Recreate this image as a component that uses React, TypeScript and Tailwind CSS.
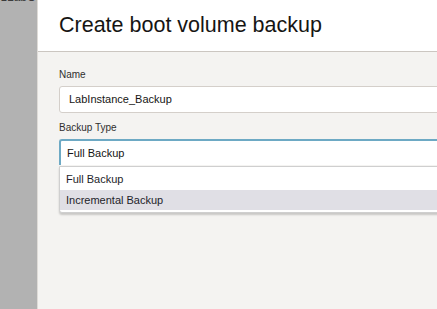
const App = () => {
  return (
    <main className="flex h-[309px] w-[437px] overflow-hidden bg-[#f4f3f1] font-['Liberation_Sans',Arial,sans-serif]">
      <aside className="w-[37px] shrink-0 overflow-hidden bg-[#b2b2b2]">
        <p className="-mt-[9px] pl-[1px] text-[12px] leading-[12px] text-[#3b3b3b]">zLabCo</p>
      </aside>

      <section className="flex min-w-0 flex-1 flex-col border-l border-[#dedbd7]">
        <header className="flex h-[52px] shrink-0 items-center border-b border-[#cbc6c1] bg-white pl-[21px] pb-[1px]">
          <h1 className="whitespace-nowrap text-[21.5px] font-normal text-[#161513]">
            Create boot volume backup
          </h1>
        </header>

        <div className="w-[420px] pl-[21px] pt-[17px]">
          <label className="block text-[10px] leading-[12px] text-[#2f2f2f]">Name</label>
          <div className="mt-[5px] flex h-[27px] items-center rounded-[3px] border border-[#d4cfca] bg-white pl-[9px] text-[11px] text-[#161513]">
            LabInstance_Backup
          </div>

          <label className="mt-[9px] block text-[10px] leading-[12px] text-[#2f2f2f]">Backup Type</label>
          <div className="mt-[5px] flex h-[26px] items-center rounded-tl-[3px] border-l-2 border-t-2 border-[#6da9c4] bg-white pl-[6px] text-[11px] text-[#161513]">
            Full Backup
          </div>

          <ul className="mt-[1px] rounded-b-[3px] border border-[#cfcfcf] bg-white pb-[2px] text-[11px] text-[#1e1e2a] shadow-[0_2px_2px_rgba(0,0,0,0.18)]">
            <li className="flex h-[23px] items-center pl-[6px] pt-[1px]">Full Backup</li>
            <li className="flex h-[20px] items-center bg-[#e0dfe5] pl-[6px]">Incremental Backup</li>
          </ul>
        </div>
      </section>
    </main>
  )
}

export default App
